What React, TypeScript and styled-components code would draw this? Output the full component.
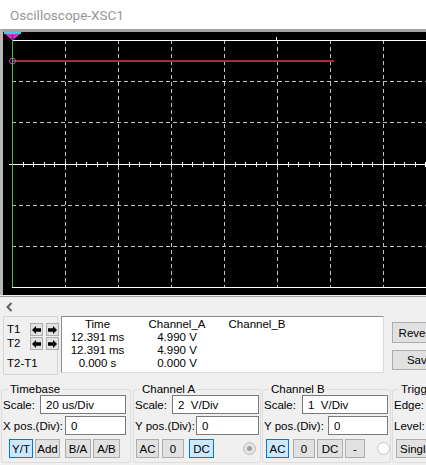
import React from 'react';
import styled, { createGlobalStyle } from 'styled-components';

const GlobalStyle = createGlobalStyle`
  html, body {
    margin: 0;
    padding: 0;
    background: #f0f0f0;
    overflow: hidden;
  }
  body {
    font-family: "Liberation Sans", Arial, sans-serif;
    font-size: 11.5px;
    color: #000;
  }
`;

const Window = styled.div`
  width: 426px;
  height: 465px;
  overflow: hidden;
  background: #f0f0f0;
  display: flex;
  flex-direction: column;
`;

const TitleBar = styled.div`
  height: 29px;
  flex-shrink: 0;
  background: #fff;
  padding-left: 10px;
  display: flex;
  align-items: center;
  font-family: Roboto, "Liberation Sans", sans-serif;
  font-size: 13.5px;
  color: #969696;
`;

const ScreenFrame = styled.div`
  height: 263px;
  flex-shrink: 0;
  background: #000;
  border-top: 3px solid #a4a4a4;
  border-left: 3px solid #b8b8b8;

  svg {
    display: block;
  }
`;

const ScrollRow = styled.div`
  height: 19px;
  flex-shrink: 0;
  margin-top: 1px;
  border-top: 1px solid #a0a0a0;
  display: flex;
  align-items: center;
  padding-left: 6px;
`;

const CursorRow = styled.div`
  height: 60px;
  flex-shrink: 0;
  display: flex;
  padding-left: 3px;

  & > * {
    flex-shrink: 0;
  }
`;

const CursorBox = styled.div`
  box-sizing: border-box;
  width: 55px;
  height: 59px;
  border: 1px solid #d5d5d5;
  padding: 6px 0 0 3px;
  display: grid;
  grid-template-columns: 20px 13px 13px;
  grid-template-rows: 13px 13px 13px;
  column-gap: 3px;
  row-gap: 1px;
`;

const CursorLabel = styled.span<{ $wide?: boolean }>`
  line-height: 13px;
  white-space: nowrap;
  grid-column: ${({ $wide }) => ($wide ? '1 / 4' : 'auto')};
  margin-top: ${({ $wide }) => ($wide ? '6px' : '0')};
`;

const ArrowButton = styled.button`
  box-sizing: border-box;
  width: 13px;
  height: 13px;
  padding: 0;
  border: 1px solid #adadad;
  background: #e1e1e1;
  display: flex;
  align-items: center;
  justify-content: center;
`;

const DataBox = styled.div`
  box-sizing: border-box;
  width: 323px;
  height: 57px;
  margin-left: 3px;
  background: #fff;
  border: 1px solid;
  border-color: #8c8c8c #dadada #dadada #8c8c8c;
  padding-top: 1px;
  display: grid;
  grid-template-columns: 71px 88px 72px;
  grid-auto-rows: 13px;
`;

const DataCell = styled.span`
  text-align: center;
  line-height: 13px;
  white-space: nowrap;
`;

const SideButtons = styled.div`
  margin-left: 8px;
  padding-top: 6px;
  display: flex;
  flex-direction: column;
  gap: 7px;
`;

const PushButton = styled.button<{ $h: number; $w: number }>`
  box-sizing: border-box;
  width: ${({ $w }) => $w}px;
  height: ${({ $h }) => $h}px;
  padding: 0;
  border: 1px solid #adadad;
  background: #e1e1e1;
  font: inherit;
  text-align: center;
  white-space: nowrap;
  overflow: hidden;
`;

const ControlsRow = styled.div`
  display: flex;
  margin-top: 7px;
  padding-left: 1px;
`;

const Group = styled.fieldset<{ $w: number; $gap: number }>`
  box-sizing: border-box;
  flex-shrink: 0;
  width: ${({ $w }) => $w}px;
  margin: 0 0 0 ${({ $gap }) => $gap}px;
  padding: 0 0 4px 1px;
  border: 1px solid #dcdcdc;
  border-radius: 3px;
  min-width: 0;
`;

const Legend = styled.legend`
  margin-left: 5px;
  padding: 0 2px;
  line-height: 12px;
`;

const FieldRow = styled.div<{ $pr: number; $mt: number }>`
  height: 19px;
  margin-top: ${({ $mt }) => $mt}px;
  padding-right: ${({ $pr }) => $pr}px;
  display: flex;
  align-items: center;
  justify-content: space-between;
`;

const FieldLabel = styled.span`
  white-space: nowrap;
`;

const ValueInput = styled.input<{ $w: number }>`
  box-sizing: border-box;
  width: ${({ $w }) => $w}px;
  height: 19px;
  margin: 0;
  padding: 0 0 0 5px;
  border: 1px solid #7a7a7a;
  background: #fff;
  font: inherit;
  outline: none;
  white-space: pre;
`;

const ButtonRow = styled.div<{ $pl: number }>`
  height: 19px;
  margin-top: 4px;
  padding-left: ${({ $pl }) => $pl}px;
  display: flex;
  align-items: center;
`;

const ToggleButton = styled.button<{ $w: number; $ml?: number; $active?: boolean; $left?: boolean }>`
  box-sizing: border-box;
  width: ${({ $w }) => $w}px;
  height: 19px;
  margin-left: ${({ $ml }) => $ml ?? 0}px;
  padding: ${({ $left }) => ($left ? '0 0 0 3px' : '0')};
  flex-shrink: 0;
  border: 1px solid ${({ $active }) => ($active ? '#0078d7' : '#adadad')};
  background: ${({ $active }) => ($active ? '#cce8ff' : '#e1e1e1')};
  font: inherit;
  text-align: ${({ $left }) => ($left ? 'left' : 'center')};
  white-space: nowrap;
`;

const Radio = styled.span<{ $checked?: boolean; $mr: number }>`
  box-sizing: border-box;
  width: 13px;
  height: 13px;
  margin-left: auto;
  margin-right: ${({ $mr }) => $mr}px;
  border-radius: 50%;
  border: 1px solid ${({ $checked }) => ($checked ? '#bcbcbc' : '#c4c4c4')};
  background: ${({ $checked }) => ($checked ? '#e4e4e4' : '#fff')};
  display: flex;
  align-items: center;
  justify-content: center;

  &::after {
    content: '';
    display: ${({ $checked }) => ($checked ? 'block' : 'none')};
    width: 5px;
    height: 5px;
    border-radius: 50%;
    background: #a0a0a0;
  }
`;

// scope display geometry, in pixels inside the black frame
const X0 = 9;
const DIV_X = 53;
const TOP = 8;
const BOTTOM = 255;
const DIV_Y = (BOTTOM - TOP) / 6;
const MID_Y = 132;
const SCREEN_W = 423;
const SCREEN_H = 263;

const ScopeScreen: React.FC = () => {
  const verticals = [1, 2, 3, 4, 5, 6, 7].map((k) => X0 + DIV_X * k);
  const horizontals = [1, 2, 4, 5].map((k) => Math.round(TOP + DIV_Y * k));
  const ticks: number[] = [];
  for (let x = X0 + DIV_X / 5; x < SCREEN_W; x += DIV_X / 5) ticks.push(Math.round(x));

  return (
    <svg width={SCREEN_W} height={SCREEN_H} viewBox={`0 0 ${SCREEN_W} ${SCREEN_H}`}>
      {verticals.map((x) => (
        <line key={`v${x}`} x1={x + 0.5} y1={TOP} x2={x + 0.5} y2={BOTTOM} stroke="#c4c4c4" strokeDasharray="4 3" />
      ))}
      {horizontals.map((y) => (
        <line key={`h${y}`} x1={X0} y1={y + 0.5} x2={SCREEN_W} y2={y + 0.5} stroke="#c4c4c4" strokeDasharray="4 3" />
      ))}
      <line x1={X0} y1={TOP + 0.5} x2={SCREEN_W} y2={TOP + 0.5} stroke="#fff" />
      <line x1={X0} y1={BOTTOM + 0.5} x2={SCREEN_W} y2={BOTTOM + 0.5} stroke="#fff" />
      <line x1={6} y1={MID_Y + 0.5} x2={SCREEN_W} y2={MID_Y + 0.5} stroke="#fff" />
      {ticks.map((x) => (
        <line key={`t${x}`} x1={x + 0.5} y1={MID_Y - 2} x2={x + 0.5} y2={MID_Y + 3} stroke="#fff" />
      ))}
      <line x1={273.5} y1={5} x2={273.5} y2={TOP} stroke="#fff" />

      {/* channel A trace */}
      <line x1={X0} y1={29} x2={331} y2={29} stroke="#a82a3c" strokeWidth={2} />
      <circle cx={X0 + 0.5} cy={29} r={3} fill="none" stroke="#c050c8" strokeWidth={1} />

      {/* cursor line and its marker */}
      <line x1={X0 + 0.5} y1={7} x2={X0 + 0.5} y2={BOTTOM} stroke="#3cc83c" />
      <rect x={1} y={0} width={17} height={2} fill="#38d0e0" />
      <polygon points="2,2 17,2 9.5,8.5" fill="#d030d0" />
      <text x={9.5} y={7} fontSize={6} textAnchor="middle" fill="#400040" fontFamily="Liberation Sans, sans-serif">
        1
      </text>
    </svg>
  );
};

const ArrowIcon: React.FC<{ dir: 'left' | 'right' }> = ({ dir }) => (
  <svg width={9} height={8} viewBox="0 0 9 8">
    <path
      d="M0 4 L4 0 L4 2.2 L9 2.2 L9 5.8 L4 5.8 L4 8 Z"
      fill="#000"
      transform={dir === 'right' ? 'translate(9 0) scale(-1 1)' : undefined}
    />
  </svg>
);

const readings = [
  ['Time', 'Channel_A', 'Channel_B'],
  ['12.391 ms', '4.990 V', ''],
  ['12.391 ms', '4.990 V', ''],
  ['0.000 s', '0.000 V', ''],
];

const App: React.FC = () => (
  <Window>
    <GlobalStyle />
    <TitleBar>Oscilloscope-XSC1</TitleBar>

    <ScreenFrame>
      <ScopeScreen />
    </ScreenFrame>

    <ScrollRow>
      <svg width={7} height={10} viewBox="0 0 7 10">
        <polyline points="5.5,1 1.5,5 5.5,9" fill="none" stroke="#606060" strokeWidth={2} />
      </svg>
    </ScrollRow>

    <CursorRow>
      <CursorBox>
        <CursorLabel>T1</CursorLabel>
        <ArrowButton><ArrowIcon dir="left" /></ArrowButton>
        <ArrowButton><ArrowIcon dir="right" /></ArrowButton>
        <CursorLabel>T2</CursorLabel>
        <ArrowButton><ArrowIcon dir="left" /></ArrowButton>
        <ArrowButton><ArrowIcon dir="right" /></ArrowButton>
        <CursorLabel $wide>T2-T1</CursorLabel>
      </CursorBox>

      <DataBox>
        {readings.flatMap((row, r) =>
          row.map((cell, c) => <DataCell key={`${r}-${c}`}>{cell}</DataCell>)
        )}
      </DataBox>

      <SideButtons>
        <PushButton $w={56} $h={21}>Reverse</PushButton>
        <PushButton $w={56} $h={20}>Save</PushButton>
      </SideButtons>
    </CursorRow>

    <ControlsRow>
      <Group $w={130} $gap={0}>
        <Legend>Timebase</Legend>
        <FieldRow $pr={4} $mt={0}>
          <FieldLabel>Scale:</FieldLabel>
          <ValueInput $w={86} readOnly value="20 us/Div" />
        </FieldRow>
        <FieldRow $pr={4} $mt={2}>
          <FieldLabel>X pos.(Div):</FieldLabel>
          <ValueInput $w={61} readOnly value="0" />
        </FieldRow>
        <ButtonRow $pl={6}>
          <ToggleButton $w={24} $active>Y/T</ToggleButton>
          <ToggleButton $w={25} $ml={2}>Add</ToggleButton>
          <ToggleButton $w={26} $ml={5}>B/A</ToggleButton>
          <ToggleButton $w={27} $ml={2}>A/B</ToggleButton>
        </ButtonRow>
      </Group>

      <Group $w={128} $gap={2}>
        <Legend>Channel A</Legend>
        <FieldRow $pr={1} $mt={0}>
          <FieldLabel>Scale:</FieldLabel>
          <ValueInput $w={87} readOnly value="2  V/Div" />
        </FieldRow>
        <FieldRow $pr={1} $mt={2}>
          <FieldLabel>Y pos.(Div):</FieldLabel>
          <ValueInput $w={63} readOnly value="0" />
        </FieldRow>
        <ButtonRow $pl={1}>
          <ToggleButton $w={23}>AC</ToggleButton>
          <ToggleButton $w={22} $ml={3}>0</ToggleButton>
          <ToggleButton $w={25} $ml={5} $active>DC</ToggleButton>
          <Radio $checked $mr={4} />
        </ButtonRow>
      </Group>

      <Group $w={129} $gap={1}>
        <Legend>Channel B</Legend>
        <FieldRow $pr={2} $mt={0}>
          <FieldLabel>Scale:</FieldLabel>
          <ValueInput $w={86} readOnly value="1  V/Div" />
        </FieldRow>
        <FieldRow $pr={2} $mt={2}>
          <FieldLabel>Y pos.(Div):</FieldLabel>
          <ValueInput $w={60} readOnly value="0" />
        </FieldRow>
        <ButtonRow $pl={2}>
          <ToggleButton $w={23} $active>AC</ToggleButton>
          <ToggleButton $w={22} $ml={4}>0</ToggleButton>
          <ToggleButton $w={26} $ml={2}>DC</ToggleButton>
          <ToggleButton $w={20} $ml={2}>-</ToggleButton>
          <Radio $mr={0} />
        </ButtonRow>
      </Group>

      <Group $w={140} $gap={1}>
        <Legend>Trigger</Legend>
        <FieldRow $pr={0} $mt={0}>
          <FieldLabel>Edge:</FieldLabel>
        </FieldRow>
        <FieldRow $pr={0} $mt={2}>
          <FieldLabel>Level:</FieldLabel>
        </FieldRow>
        <ButtonRow $pl={2}>
          <ToggleButton $w={50} $left>Single</ToggleButton>
        </ButtonRow>
      </Group>
    </ControlsRow>
  </Window>
);

export default App;
